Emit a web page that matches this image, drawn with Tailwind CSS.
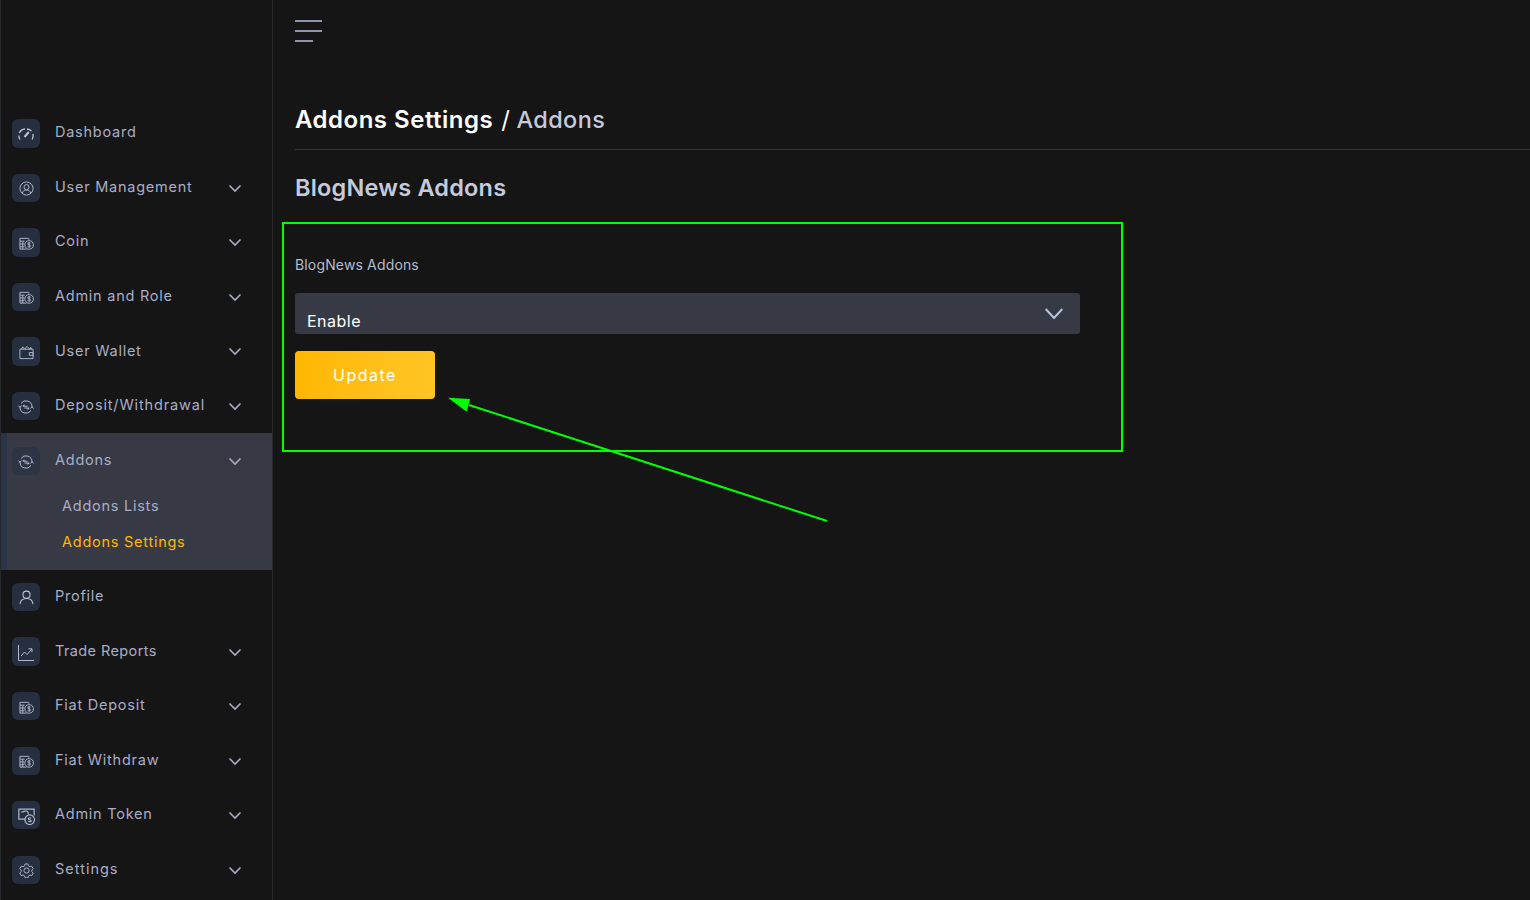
<!DOCTYPE html>
<html><head><meta charset="utf-8"><title>Addons</title>
<script src="https://cdn.jsdelivr.net/npm/@tailwindcss/browser@4"></script></head>
<body class="bg-[#151515] font-['Inter','Liberation_Sans',sans-serif] overflow-hidden">
<svg class="hidden"><defs>
<symbol id="chev" viewBox="0 0 14 14"><path d="M1.5 4.500 7 10l5.500-5.500" fill="none" stroke="#a9adc6" stroke-width="1.600"/></symbol>
<symbol id="dash" viewBox="0 0 16 16"><g fill="none" stroke="#c0c4d6" stroke-width="1.300"><path d="M2 13.500A6.800 6.800 0 0 1 .9 9.500"/><path d="M1.300 7A7 7 0 0 1 7 3"/><path d="M9 3a7 7 0 0 1 4.500 2"/><path d="M14.800 8a7 7 0 0 1-.8 5.500"/><path d="M6.500 11 10.800 6" stroke-width="2"/></g></symbol>
<symbol id="user" viewBox="0 0 16 16"><g fill="none" stroke="#b4b8cc" stroke-width="1"><circle cx="8" cy="8" r="7"/><circle cx="8" cy="6.500" r="2.700"/><path d="M3.500 13c.6-2.300 2.200-3.500 4.500-3.500s3.900 1.200 4.500 3.500"/></g></symbol>
<symbol id="coin" viewBox="0 0 16 16"><g fill="none" stroke="#b4b8cc" stroke-width="1"><path d="M1 2.500h9M1 5.500h5M1 8.500h4.500M1 11.500h4.500M1 14h7M1 2.500V14M4 5.500V14M10.500 2.500v1.500"/><circle cx="10.800" cy="9.500" r="4.600"/><path d="M12.300 7.800c-.6-.7-2.800-.8-3 .4-.2 1.400 3.200 1 3 2.600-.2 1.100-2.500 1-3.200.2M10.800 6.400v6.200"/></g></symbol>
<symbol id="wallet" viewBox="0 0 16 16"><g fill="none" stroke="#b4b8cc" stroke-width="1"><path d="M1 4.500h14v10H1zM11 8h4v3h-4z"/><path d="M2.500 4.500 4 2l2 2.500L8.500 1.500l3 3 1-2 1 2"/></g></symbol>
<symbol id="swap" viewBox="0 0 16 16"><g fill="none" stroke="#b4b8cc" stroke-width="1"><path d="M3 4.500A6 6 0 0 1 14 8"/><path d="M13 11.500A6 6 0 0 1 2 8"/><path d="M.4 6.500 2 8.300l1.600-1.800M12.400 9.500 14 7.700l1.600 1.800"/><path d="M4.800 7.200h4.700M6.500 5.800 4.800 7.200M6.500 9h4.700M9.500 10.400 11.200 9" stroke-width="1.100"/></g></symbol>
<symbol id="person" viewBox="0 0 16 16"><g fill="none" stroke="#c0c4d6" stroke-width="1.100"><circle cx="8" cy="5" r="3.800"/><path d="M1 15c.5-3.800 3-6 7-6s6.500 2.200 7 6"/></g></symbol>
<symbol id="chart" viewBox="0 0 16 16"><g fill="none" stroke="#b4b8cc" stroke-width="1"><path d="M.5 0v15.500H16"/><path d="M3 11l3.500-4 2.500 2.500L14 4M10.500 3.800H14V7"/></g></symbol>
<symbol id="token" viewBox="0 0 16 16"><g fill="none" stroke="#b4b8cc" stroke-width="1.100"><path d="M7 10.500H.8V1h14.400v6"/><path d="M3 3.800c2.500 0 3-1 4.500-1 1.700 0 2.500 1.500 2 3"/><circle cx="11" cy="11" r="4.500"/><path d="M12.300 9.600c-.8-.7-2.500-.6-2.600.4 0 1.300 2.800.8 2.700 2.100-.1 1-1.900 1-2.700.3"/></g></symbol>
<symbol id="gear" viewBox="0 0 16 16"><g fill="none" stroke="#b4b8cc" stroke-width="1"><circle cx="8" cy="8" r="2.800"/><path d="M6.500 1h3l.5 2 1.700 1 2-.6 1.400 2.600-1.400 1.500v1.800l1.400 1.500-1.400 2.600-2-.6-1.700 1-.5 2h-3l-.5-2-1.700-1-2 .6L.9 10.800l1.400-1.500V7.500L.9 6l1.400-2.600 2 .6L6 3z"/></g></symbol>
</defs></svg>

<div class="flex h-[900px] w-[1530px]">
  <aside class="w-[273px] shrink-0 border-l border-r border-[#26282b] pt-[106px] h-full overflow-hidden">
    <nav class="text-[14.500px] tracking-[0.75px] text-[#a9adc6]">
      <a class="flex items-center h-[54.550px] pl-[11px] pr-[30px]"><span class="flex items-center justify-center w-[28px] h-[29px] rounded-md bg-[#262f40] mr-[15px]"><svg class="w-[16px] h-[16px] translate-y-[1px]"><use href="#dash"/></svg></span><span class="flex-1 -mt-[3px]">Dashboard</span></a>
      <a class="flex items-center h-[54.550px] pl-[11px] pr-[30px]"><span class="flex items-center justify-center w-[28px] h-[28px] rounded-md bg-[#262f40] mr-[15px]"><svg class="w-[15px] h-[15px] translate-y-[1px]"><use href="#user"/></svg></span><span class="flex-1 -mt-[2px]">User Management</span><svg class="w-[14px] h-[14px]"><use href="#chev"/></svg></a>
      <a class="flex items-center h-[54.550px] pl-[11px] pr-[30px]"><span class="flex items-center justify-center w-[28px] h-[29px] rounded-md bg-[#262f40] mr-[15px]"><svg class="w-[15px] h-[15px] translate-y-[1px]"><use href="#coin"/></svg></span><span class="flex-1 -mt-[3px]">Coin</span><svg class="w-[14px] h-[14px]"><use href="#chev"/></svg></a>
      <a class="flex items-center h-[54.550px] pl-[11px] pr-[30px]"><span class="flex items-center justify-center w-[28px] h-[28px] rounded-md bg-[#262f40] mr-[15px]"><svg class="w-[15px] h-[15px] translate-y-[1px]"><use href="#coin"/></svg></span><span class="flex-1 -mt-[2px]">Admin and Role</span><svg class="w-[14px] h-[14px]"><use href="#chev"/></svg></a>
      <a class="flex items-center h-[54.550px] pl-[11px] pr-[30px]"><span class="flex items-center justify-center w-[28px] h-[29px] rounded-md bg-[#262f40] mr-[15px]"><svg class="w-[15px] h-[15px] translate-y-[1px]"><use href="#wallet"/></svg></span><span class="flex-1 -mt-[2px]">User Wallet</span><svg class="w-[14px] h-[14px]"><use href="#chev"/></svg></a>
      <a class="flex items-center h-[54.550px] pl-[11px] pr-[30px]"><span class="flex items-center justify-center w-[28px] h-[28px] rounded-md bg-[#262f40] mr-[15px]"><svg class="w-[16px] h-[16px] translate-y-[1px]"><use href="#swap"/></svg></span><span class="flex-1 -mt-[3px] tracking-[0.85px]">Deposit/Withdrawal</span><svg class="w-[14px] h-[14px]"><use href="#chev"/></svg></a>
      <div class="bg-[#373a45] border-l-[7px] border-[#2b3348] -ml-px h-[136.700px]">
        <a class="flex items-center h-[54.550px] pl-[5px] pr-[30px]"><span class="flex items-center justify-center w-[28px] h-[28px] rounded-md bg-[#2d3444] mr-[15px]"><svg class="w-[16px] h-[16px] translate-y-[1px]"><use href="#swap"/></svg></span><span class="flex-1 -mt-[2px]">Addons</span><svg class="w-[14px] h-[14px]"><use href="#chev"/></svg></a>
        <a class="block pl-[55px] h-[36px] leading-[36px]">Addons Lists</a>
        <a class="block pl-[55px] h-[36px] leading-[36px] text-[#ffb800]">Addons Settings</a>
      </div>
      <a class="flex items-center h-[54.550px] pl-[11px] pr-[30px]"><span class="flex items-center justify-center w-[28px] h-[28px] rounded-md bg-[#262f40] mr-[15px]"><svg class="w-[15px] h-[15px]"><use href="#person"/></svg></span><span class="flex-1 -mt-[3px]">Profile</span></a>
      <a class="flex items-center h-[54.550px] pl-[11px] pr-[30px]"><span class="flex items-center justify-center w-[28px] h-[29px] rounded-md bg-[#262f40] mr-[15px]"><svg class="w-[16px] h-[16px] translate-y-[1px]"><use href="#chart"/></svg></span><span class="flex-1 -mt-[2px] tracking-[0.4px]">Trade Reports</span><svg class="w-[14px] h-[14px]"><use href="#chev"/></svg></a>
      <a class="flex items-center h-[54.550px] pl-[11px] pr-[30px]"><span class="flex items-center justify-center w-[28px] h-[28px] rounded-md bg-[#262f40] mr-[15px]"><svg class="w-[15px] h-[15px] translate-y-[1px]"><use href="#coin"/></svg></span><span class="flex-1 -mt-[3px]">Fiat Deposit</span><svg class="w-[14px] h-[14px]"><use href="#chev"/></svg></a>
      <a class="flex items-center h-[54.550px] pl-[11px] pr-[30px]"><span class="flex items-center justify-center w-[28px] h-[28px] rounded-md bg-[#262f40] mr-[15px]"><svg class="w-[15px] h-[15px] translate-y-[1px]"><use href="#coin"/></svg></span><span class="flex-1 -mt-[3px]">Fiat Withdraw</span><svg class="w-[14px] h-[14px]"><use href="#chev"/></svg></a>
      <a class="flex items-center h-[54.550px] pl-[11px] pr-[30px]"><span class="flex items-center justify-center w-[28px] h-[28px] rounded-md bg-[#262f40] mr-[15px]"><svg class="w-[17px] h-[17px] translate-y-[1px]"><use href="#token"/></svg></span><span class="flex-1 -mt-[3px]">Admin Token</span><svg class="w-[14px] h-[14px]"><use href="#chev"/></svg></a>
      <a class="flex items-center h-[54.550px] pl-[11px] pr-[30px]"><span class="flex items-center justify-center w-[28px] h-[28px] rounded-md bg-[#262f40] mr-[15px]"><svg class="w-[15px] h-[15px] translate-y-[1px]"><use href="#gear"/></svg></span><span class="flex-1 -mt-[3px] tracking-[1px]">Settings</span><svg class="w-[14px] h-[14px]"><use href="#chev"/></svg></a>
    </nav>
  </aside>

  <main class="flex-1 pl-[22px] relative">
    <div class="pt-[20px] flex flex-col gap-[8px] w-[27px]">
      <span class="block h-[2px] bg-[#8f93ab] w-[27px]"></span>
      <span class="block h-[2px] bg-[#8f93ab] w-[27px]"></span>
      <span class="block h-[2px] bg-[#8f93ab] w-[18px]"></span>
    </div>
    <h1 class="mt-[65px] h-[43px] pb-[14px] flex items-end border-b border-[#333537] text-[24px] leading-[30px] font-semibold tracking-[0.5px] text-white">Addons Settings <span class="ml-[8px] mr-[6px] font-normal">/</span><span class="font-medium text-[#c4cbdc] text-[23.500px] tracking-[0.4px]">Addons</span></h1>
    <h2 class="mt-[23px] text-[23.500px] leading-[30px] font-semibold tracking-[0.2px] text-[#c4cbdc]">BlogNews Addons</h2>
    <label class="block mt-[52px] text-[14px] leading-[20px] tracking-[0.15px] text-[#b4bccb]">BlogNews Addons</label>
    <div class="mt-[18px] w-[785px] h-[41px] rounded-[3px] bg-[#373a45] relative flex items-end pl-[12px] pr-[17px] justify-between">
      <span class="text-[16px] leading-[24px] tracking-[0.5px] text-white mb-[1px]">Enable</span>
      <svg class="absolute right-[17px] top-[15px] w-[18px] h-[12px]" viewBox="0 0 18 12"><path d="M.7 1 9 10 17.300 1" fill="none" stroke="#b7c6e0" stroke-width="2"/></svg>
    </div>
    <button class="block mt-[17px] w-[140px] h-[48px] rounded-[4px] bg-gradient-to-r from-[#ffb800] to-[#ffc524] text-white text-[16px] tracking-[1.500px] text-center">Update</button>

    <div class="absolute left-[9px] top-[222px] w-[841px] h-[230px] border-2 border-[#00ff00] pointer-events-none"></div>
    <svg class="absolute left-0 top-0 w-[1257px] h-[900px] pointer-events-none" viewBox="0 0 1257 900">
      <path d="M196 405 L554 521" stroke="#00ff00" stroke-width="2" fill="none"/>
      <path d="M175 397.700 L197 399 L193.700 411.700 Z" fill="#00ff00"/>
    </svg>
  </main>
</div>
</body></html>
